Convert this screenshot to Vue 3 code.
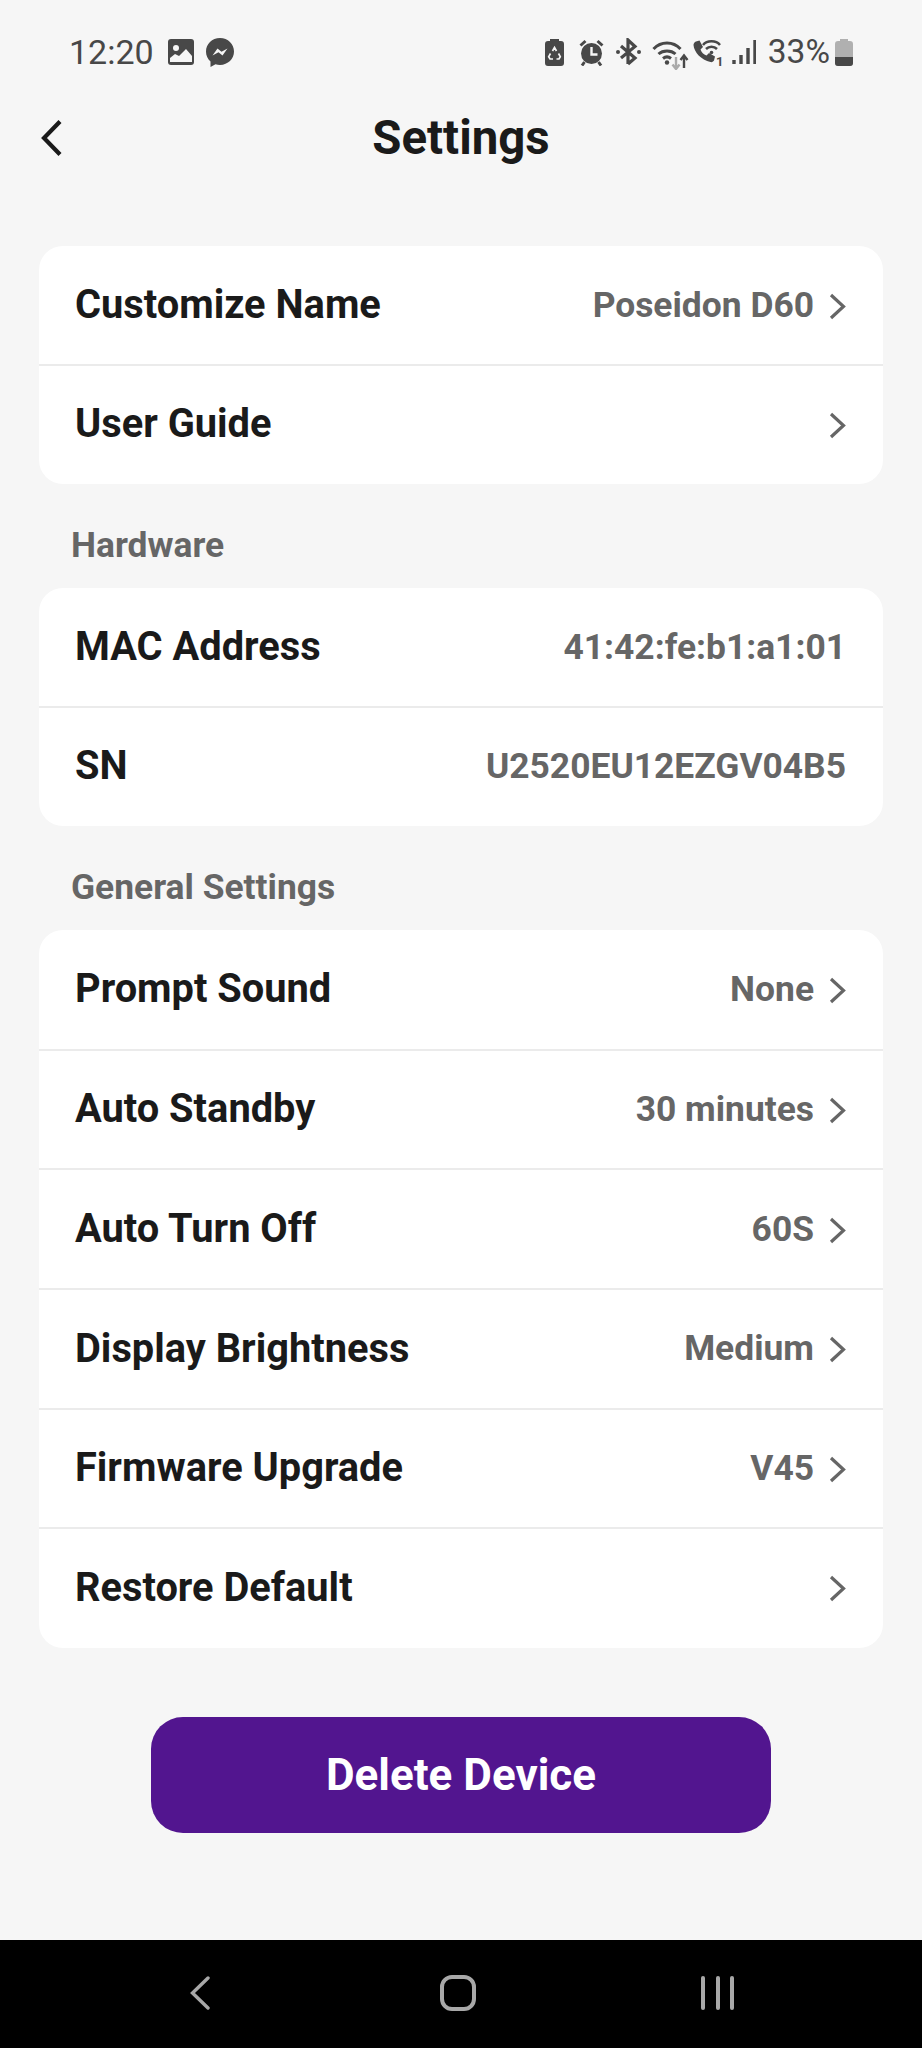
<script setup>
const groups = [
  { rows: [
    { label: 'Customize Name', value: 'Poseidon D60', arrow: true },
    { label: 'User Guide', arrow: true },
  ] },
  { title: 'Hardware', rows: [
    { label: 'MAC Address', value: '41:42:fe:b1:a1:01' },
    { label: 'SN', value: 'U2520EU12EZGV04B5' },
  ] },
  { title: 'General Settings', tall: true, rows: [
    { label: 'Prompt Sound', value: 'None', arrow: true },
    { label: 'Auto Standby', value: '30 minutes', arrow: true },
    { label: 'Auto Turn Off', value: '60S', arrow: true },
    { label: 'Display Brightness', value: 'Medium', arrow: true },
    { label: 'Firmware Upgrade', value: 'V45', arrow: true },
    { label: 'Restore Default', arrow: true },
  ] },
]
</script>

<template>
  <div class="page">
    <div class="status">
      <div class="status-left">
        <span class="time">12:20</span>
        <svg class="i-img" viewBox="0 0 26 26"><rect width="26" height="26" rx="3" fill="#484848"/><circle cx="8" cy="9" r="3" fill="#f6f6f6"/><path d="M2 23v-4l5-4 4 2 7-7 6 7v6z" fill="#f6f6f6"/></svg>
        <svg class="i-msg" viewBox="0 0 28 29"><path d="M14 0C6 0 0 6 0 13.500c0 4 1.700 7.500 4.500 10V29l5-2.700c1.400.4 2.900.6 4.500.6 8 0 14-6 14-13.400S22 0 14 0z" fill="#484848"/><path d="M6.500 17.500l5-7 4 3.300 6-3.300-5 7-4-3.300z" fill="#f6f6f6"/></svg>
      </div>
      <div class="status-right">
        <svg class="i-bat" viewBox="0 0 19 27"><path d="M5 2V0h9v2h2a3 3 0 0 1 3 3v19a3 3 0 0 1-3 3H3a3 3 0 0 1-3-3V5a3 3 0 0 1 3-3z" fill="#484848"/><path d="M7.500 12l2-3.500 2 3.500M13.500 14.500l1.800 3.200-1.300 2.300h-2.500M5.500 14.500l-1.800 3.200L5 20h3" fill="none" stroke="#f6f6f6" stroke-width="1.700"/></svg>
        <svg class="i-alarm" viewBox="0 0 25 27"><circle cx="12.500" cy="14.500" r="10.500" fill="#484848"/><path d="M12.500 8v7.500h6" fill="none" stroke="#f6f6f6" stroke-width="2.400"/><path d="M1.500 6.500l5-4.500M23.500 6.500l-5-4.500M5.500 23l-2.500 3.500M19.500 23l2.500 3.500" stroke="#484848" stroke-width="3" fill="none"/></svg>
        <svg class="i-bt" viewBox="0 0 25 28"><path d="M12 26V2l7 6.500L5 20M5 8l14 12-7 6" fill="none" stroke="#484848" stroke-width="3.200"/><circle cx="2" cy="14" r="2" fill="#484848"/><circle cx="23" cy="14" r="2" fill="#484848"/></svg>
        <svg class="i-wifi" viewBox="0 0 38 32"><path d="M1.500 11C9 3 21 3 28.500 11M6.500 16C11 12 19 12 23.500 16M11 20.500C13.500 18.500 16.500 18.500 19 20.500" fill="none" stroke="#484848" stroke-width="3"/><circle cx="15" cy="24.500" r="2.200" fill="#484848"/><path d="M24 19v11M20.500 26.500L24 31l3.500-4.500" fill="none" stroke="#aaa" stroke-width="2.400"/><path d="M32 30V18M28.500 22L32 17.500 35.500 22" fill="none" stroke="#484848" stroke-width="2.400"/></svg>
        <svg class="i-call" viewBox="0 0 30 30"><path d="M4 3.500l3.500-1 3.500 6.500-2.500 2.500c1 3 3 5 6 6l2.500-2.500 6 3.500-1 4c-.5 1-2 2-3.500 1.500C9 22 2 14 1.500 7c0-1.500 1-3 2.500-3.500z" fill="#484848"/><path d="M11 7C15 2 24 2 28 7M14 11C17 8 22 8 25 11" fill="none" stroke="#484848" stroke-width="2.500"/><circle cx="19.500" cy="14.500" r="1.800" fill="#484848"/><text x="24" y="28" class="sub">1</text></svg>
        <svg class="i-sig" viewBox="0 0 25 26"><path d="M3 21v4M10 16v9M17 9v16M24 1v24" stroke="#484848" stroke-width="3.400" fill="none"/></svg>
        <span class="pct">33%</span>
        <svg class="i-batt" viewBox="0 0 18 27"><path d="M5 2V0h8v2h2a3 3 0 0 1 3 3v19a3 3 0 0 1-3 3H3a3 3 0 0 1-3-3V5a3 3 0 0 1 3-3z" fill="#b0b0b0"/><path d="M0 18h18v6a3 3 0 0 1-3 3H3a3 3 0 0 1-3-3z" fill="#484848"/></svg>
      </div>
    </div>

    <header class="head">
      <svg class="back" viewBox="0 0 22 38"><path d="M19 2.500L3 19l16 16.500" fill="none" stroke="#1a1a1a" stroke-width="4.200"/></svg>
      <h1>Settings</h1>
    </header>

    <main class="groups">
      <section v-for="(g, i) in groups" :key="i" :class="{ tall: g.tall }">
        <h2 v-if="g.title">{{ g.title }}</h2>
        <div class="card">
          <div v-for="r in g.rows" :key="r.label" class="row">
            <span class="label">{{ r.label }}</span>
            <span v-if="r.value" class="value">{{ r.value }}</span>
            <svg v-if="r.arrow" class="chev" viewBox="0 0 17 27"><path d="M2 2l12.500 11.500L2 25" fill="none" stroke="#666" stroke-width="3.200"/></svg>
          </div>
        </div>
      </section>
    </main>

    <div class="action"><button class="delete">Delete Device</button></div>

    <nav class="nav">
      <svg class="n-back" viewBox="0 0 20 34"><path d="M18 2L2.500 17 18 32" fill="none" stroke="#a8a8a8" stroke-width="3.400" stroke-linecap="round"/></svg>
      <span class="n-home"></span>
      <span class="n-lines"><i></i><i></i><i></i></span>
    </nav>
  </div>
</template>

<style scoped>
.page { width: 922px; height: 2048px; background: #f6f6f6; display: flex; flex-direction: column; font-family: Roboto, sans-serif; overflow: hidden; }
.status { height: 104px; flex: none; display: flex; justify-content: space-between; align-items: center; padding: 0 69px 0 69px; box-sizing: border-box; color: #484848; }
.status-left, .status-right { display: flex; align-items: center; }
.time { font-size: 34px; line-height: 1; font-weight: 400; }
.pct { font-size: 33.500px; line-height: 1; font-weight: 400; margin-left: 12px; }
.i-img { width: 26px; height: 26px; margin-left: 14px; }
.i-msg { width: 28px; height: 29px; margin-left: 12px; }
.i-bat { width: 19px; height: 27px; }
.i-alarm { width: 25px; height: 27px; margin-left: 15px; }
.i-bt { width: 25px; height: 28px; margin-left: 12px; }
.i-wifi { width: 38px; height: 32px; margin: 4px 0 0 11px; }
.i-call { width: 30px; height: 30px; margin: 2px 0 0 2px; }
.i-sig { width: 25px; height: 26px; margin-left: 9px; }
.sub { font-family: Roboto, sans-serif; font-size: 13px; font-weight: 700; fill: #484848; }
.i-batt { width: 18px; height: 27px; margin-left: 5px; }
.head { height: 66px; flex: none; position: relative; display: flex; align-items: center; justify-content: center; }
.back { position: absolute; left: 41px; top: 15px; width: 22px; height: 38px; }
h1 { margin: 4px 0 0; font-size: 47.400px; font-weight: 700; color: #1a1a1a; line-height: 1; }
.groups { margin: 76px 39px 0; display: flex; flex-direction: column; }
h2 { margin: 0; height: 104px; box-sizing: border-box; padding: 41px 0 0 32px; font-size: 35.400px; line-height: 40px; font-weight: 700; color: #666; }
.card { background: #fff; border-radius: 24px; overflow: hidden; }
.row { height: 119px; box-sizing: border-box; display: flex; align-items: center; padding: 0 37px 0 36px; border-bottom: 2px solid #ebebeb; }
.row:first-child { height: 120px; }
.row:last-child { height: 118px; border-bottom-color: transparent; }
.tall .row { height: 119.670px; }
.tall .row:first-child { height: 120.670px; }
.tall .row:last-child { height: 118.670px; }
.label { flex: 1; margin-bottom: 1px; font-size: 39.800px; font-weight: 700; color: #1a1a1a; }
.value { margin-bottom: 1px; font-size: 35.400px; font-weight: 700; color: #666; }
.chev { width: 17px; height: 27px; margin: 2px 0 0 15px; }
.action { display: flex; justify-content: center; margin-top: 69px; }
.delete { width: 620px; height: 116px; border: 0; border-radius: 32px; background: #52158f; color: #fff; font-family: Roboto, sans-serif; font-size: 44px; font-weight: 700; }
.nav { margin-top: auto; height: 108px; flex: none; background: #000; position: relative; display: flex; align-items: center; }
.n-back { position: absolute; left: 190px; top: 36px; width: 20px; height: 34px; }
.n-home { position: absolute; left: 440px; top: 35px; width: 36px; height: 36px; box-sizing: border-box; border: 4px solid #a8a8a8; border-radius: 12px; }
.n-lines { position: absolute; left: 701px; top: 36px; width: 33px; height: 34px; display: flex; justify-content: space-between; }
.n-lines i { width: 4px; height: 34px; background: #a8a8a8; border-radius: 2px; }
</style>
